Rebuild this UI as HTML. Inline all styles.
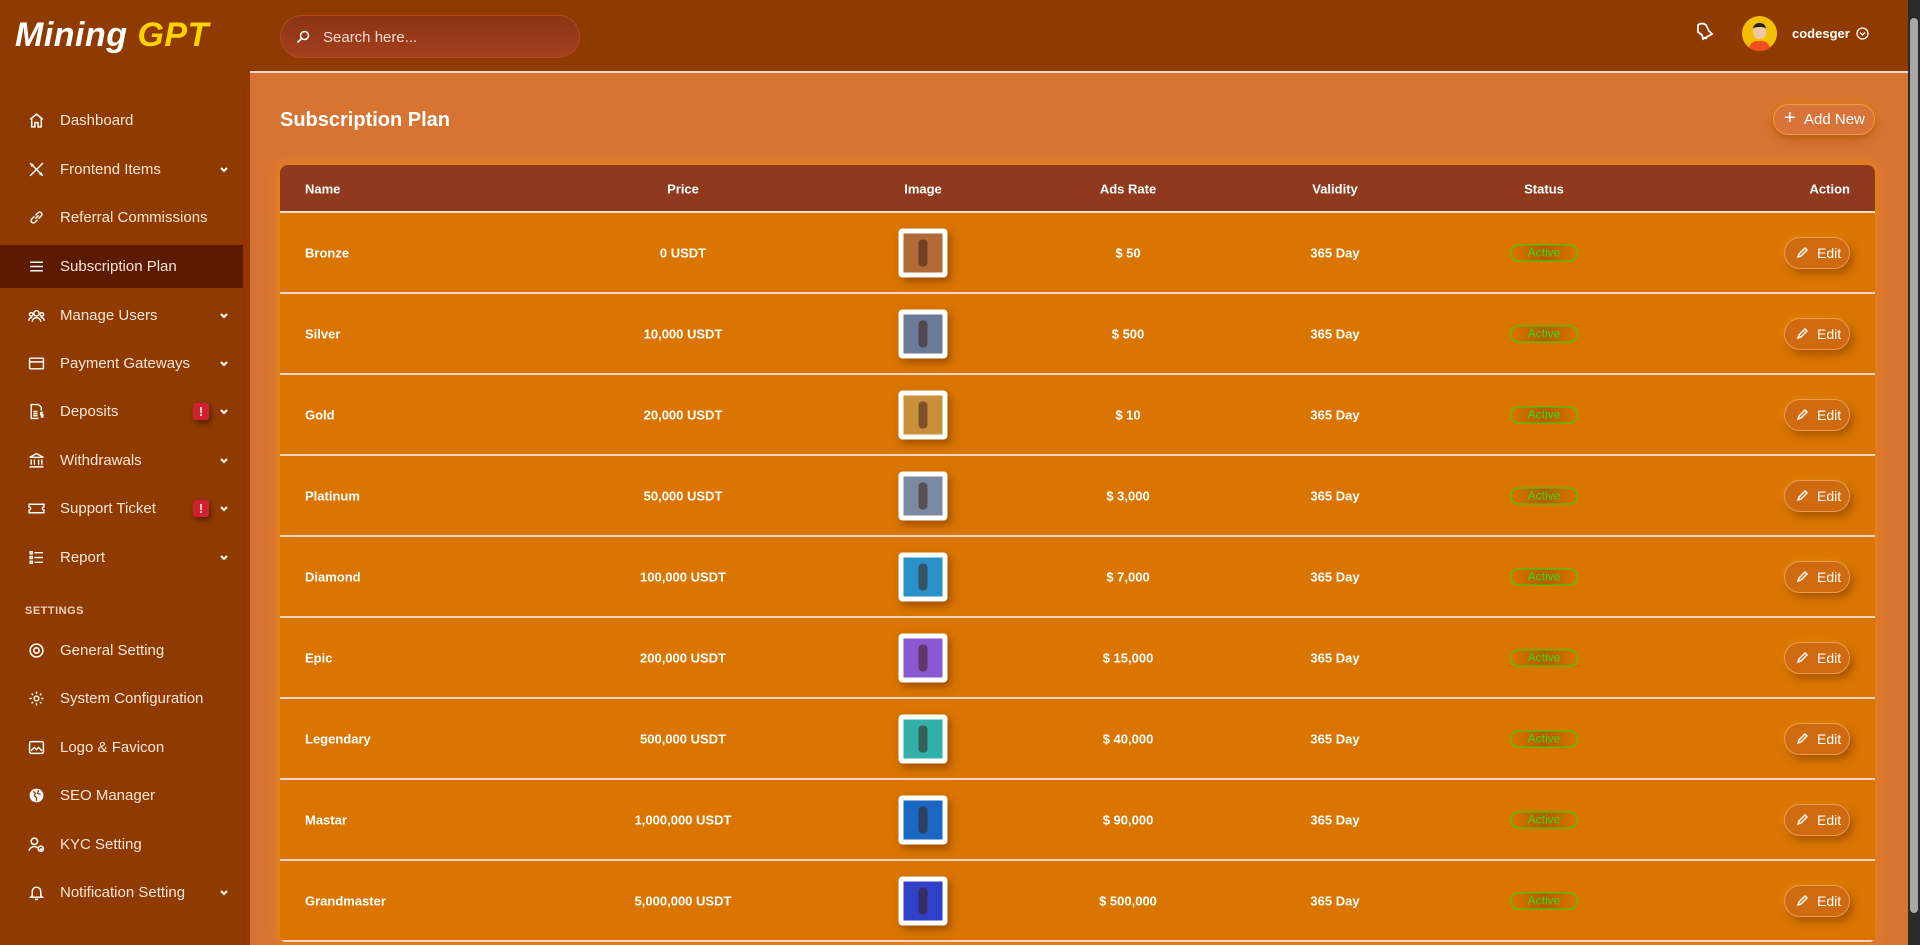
<!DOCTYPE html>
<html><head><meta charset="utf-8"><style>
*{box-sizing:border-box;margin:0;padding:0}
body{width:1920px;height:945px;overflow:hidden;background:#d87433;font-family:"Liberation Sans",sans-serif;color:#fff;position:relative}
.sb{position:absolute;left:0;top:0;width:250px;height:945px;background:#8e3a00}
.sb .edge{position:absolute;left:243px;top:90px;width:3px;height:855px;background:#a02e05}
.logo{position:absolute;left:15px;top:16px;font-size:34px;font-weight:bold;font-style:italic;letter-spacing:0.5px}
.logo span{color:#ffd400}
.item{position:absolute;left:0;width:243px;height:43px;display:flex;align-items:center;font-size:15px;color:#fbe6da}
.item.act{background:#5c1a00}
.item svg{position:absolute;left:28px;width:17px;height:17px}
.item .t{position:absolute;left:60px}
.item .ch{position:absolute;left:219px;width:10px;height:10px}
.bdg{position:absolute;left:193px;width:16px;height:17px;background:#d02030;border-radius:3px;font-weight:bold;font-size:13px;text-align:center;line-height:17px;box-shadow:2px 3px 6px rgba(0,0,0,.4)}
.set{position:absolute;left:25px;top:605px;font-size:11px;font-weight:bold;color:#f0d0c0;letter-spacing:.5px}
.hd{position:absolute;left:250px;top:0;width:1658px;height:73px;background:#8e3a00;border-bottom:2px solid #f3d9c8}
.search{position:absolute;left:30px;top:15px;width:300px;height:43px;border-radius:22px;background:linear-gradient(#8a3414,#a4401e);border:1px solid #b24a20;font-size:15px;color:#f4dcd0;padding:13px 0 0 42px}
.search svg{position:absolute;left:15px;top:14px}
.scroll{position:absolute;right:0;top:0;width:12px;height:945px;background:#2a2a2a}
.scroll div{position:absolute;left:2px;top:18px;width:8px;height:895px;background:#a8a8a8;border-radius:4px}
h1{position:absolute;left:280px;top:109px;font-size:20px;font-weight:bold}
.add{position:absolute;left:1773px;top:104px;width:102px;height:31px;border-radius:16px;border:1px solid #f09a50;background:#d8743a;box-shadow:0 3px 8px rgba(120,50,0,.5),0 0 10px #f08a10;font-size:15px;padding:6px 0 0 30px}
.add b{position:absolute;left:10px;top:2px;font-size:20px;font-weight:normal}
.tbl{position:absolute;left:280px;top:165px;width:1595px;height:778px;border-radius:8px;overflow:hidden;background:#d97500;box-shadow:0 0 14px #f08a10}
.th{height:48px;background:#8f3a1e;border-bottom:2px solid #f5e0d0;position:relative;font-size:13px;font-weight:bold}
.row{height:81px;border-bottom:2px solid #f0d8c0;position:relative;font-size:13px;font-weight:bold}
.c{position:absolute;top:50%;transform:translate(-50%,-50%);white-space:nowrap}
.l{position:absolute;top:50%;transform:translateY(-50%)}
.th .c,.th .l{top:24px}
.th .l{transform:translateY(-50%)}
.img{width:49px;height:49px;background:#fff;border-radius:4px;padding:5px;box-shadow:3px 4px 8px rgba(100,40,0,.5)}
.img div{width:100%;height:100%;position:relative}
.img div:after{content:"";position:absolute;left:15px;top:6px;width:9px;height:27px;background:rgba(60,30,20,.55);border-radius:4px}
.act2{width:68px;height:17px;border:1.5px solid #22e010;border-radius:9px;color:#30e010;font-size:12px;font-weight:normal;text-align:center;line-height:14px;background:linear-gradient(90deg,#d97500,#b85a00,#d97500)}
.edit{position:absolute;right:25px;top:50%;transform:translateY(-50%);width:66px;height:32px;border-radius:16px;border:1px solid #f09a50;background:#d06a10;box-shadow:3px 4px 8px rgba(100,40,0,.5),0 0 8px #f09010;font-size:14px;font-weight:normal;padding:7px 0 0 32px}
.edit svg{position:absolute;left:11px;top:9px}
</style></head><body>
<div class="sb"><div class="edge"></div>
<div class="logo">Mining <span>GPT</span></div>
<div class="item" style="top:99px"><svg viewBox="0 0 16 16" fill="none" stroke="#fff" stroke-width="1.4"><path d="M2 7L8 2l6 5M3.5 6v8h3v-4h3v4h3V6"/></svg><span class="t">Dashboard</span></div>
<div class="item" style="top:148px"><svg viewBox="0 0 16 16" fill="none" stroke="#fff" stroke-width="1.4"><path d="M2 2l12 12M14 2L2 14M3 5l2-2M11 13l2-2"/></svg><span class="t">Frontend Items</span><svg class="ch" viewBox="0 0 10 10"><path d="M2 3l3 3 3-3" stroke="#fff" stroke-width="2" fill="none"/></svg></div>
<div class="item" style="top:196px"><svg viewBox="0 0 16 16" fill="none" stroke="#fff" stroke-width="1.4"><path d="M7 9l3-3M6 7L3.5 9.5a2 2 0 003 3L9 10M10 9l2.5-2.5a2 2 0 00-3-3L7 6"/></svg><span class="t">Referral Commissions</span></div>
<div class="item act" style="top:245px"><svg viewBox="0 0 16 16" stroke="#fff" stroke-width="1.5"><path d="M2 4h12M2 8h12M2 12h12"/></svg><span class="t">Subscription Plan</span></div>
<div class="item" style="top:294px"><svg viewBox="0 0 16 16" fill="none" stroke="#fff" stroke-width="1.3"><circle cx="8" cy="6" r="2.5"/><circle cx="3" cy="7" r="1.7"/><circle cx="13" cy="7" r="1.7"/><path d="M4 14a4 4 0 018 0M1 13a2.5 2.5 0 013-3M15 13a2.5 2.5 0 00-3-3"/></svg><span class="t">Manage Users</span><svg class="ch" viewBox="0 0 10 10"><path d="M2 3l3 3 3-3" stroke="#fff" stroke-width="2" fill="none"/></svg></div>
<div class="item" style="top:342px"><svg viewBox="0 0 16 16" fill="none" stroke="#fff" stroke-width="1.4"><rect x="1.5" y="3" width="13" height="10" rx="1"/><path d="M1.5 6.5h13"/></svg><span class="t">Payment Gateways</span><svg class="ch" viewBox="0 0 10 10"><path d="M2 3l3 3 3-3" stroke="#fff" stroke-width="2" fill="none"/></svg></div>
<div class="item" style="top:390px"><svg viewBox="0 0 16 16" fill="none" stroke="#fff" stroke-width="1.3"><path d="M10 1.5H3v13h7M10 1.5l2.5 2.5v3M5 8h4M5 10h4M5 12h4"/><path d="M14 9h-2v2h2v2h-2M13 8v6"/></svg><span class="t">Deposits</span><div class="bdg" style="top:13px">!</div><svg class="ch" viewBox="0 0 10 10"><path d="M2 3l3 3 3-3" stroke="#fff" stroke-width="2" fill="none"/></svg></div>
<div class="item" style="top:439px"><svg viewBox="0 0 16 16" fill="none" stroke="#fff" stroke-width="1.3"><path d="M1.5 5L8 1.5 14.5 5zM3 7v5M6 7v5M10 7v5M13 7v5M1.5 14h13"/></svg><span class="t">Withdrawals</span><svg class="ch" viewBox="0 0 10 10"><path d="M2 3l3 3 3-3" stroke="#fff" stroke-width="2" fill="none"/></svg></div>
<div class="item" style="top:487px"><svg viewBox="0 0 16 16" fill="none" stroke="#fff" stroke-width="1.3"><path d="M1 4h14v2.5a1.5 1.5 0 000 3V12H1V9.5a1.5 1.5 0 000-3z"/></svg><span class="t">Support Ticket</span><div class="bdg" style="top:13px">!</div><svg class="ch" viewBox="0 0 10 10"><path d="M2 3l3 3 3-3" stroke="#fff" stroke-width="2" fill="none"/></svg></div>
<div class="item" style="top:536px"><svg viewBox="0 0 16 16" fill="none" stroke="#fff" stroke-width="1.3"><path d="M2 2.5h2v2H2zM2 7h2v2H2zM2 11.5h2v2H2zM6 3.5h8M6 8h8M6 12.5h8"/></svg><span class="t">Report</span><svg class="ch" viewBox="0 0 10 10"><path d="M2 3l3 3 3-3" stroke="#fff" stroke-width="2" fill="none"/></svg></div>
<div class="set">SETTINGS</div>
<div class="item" style="top:629px"><svg viewBox="0 0 16 16" fill="none" stroke="#fff" stroke-width="1.5"><circle cx="8" cy="8" r="6"/><circle cx="8" cy="8" r="2.5"/></svg><span class="t">General Setting</span></div>
<div class="item" style="top:677px"><svg viewBox="0 0 16 16" fill="none" stroke="#fff" stroke-width="1.4"><circle cx="8" cy="8" r="2.2"/><path d="M8 1.5v2M8 12.5v2M1.5 8h2M12.5 8h2M3.4 3.4l1.4 1.4M11.2 11.2l1.4 1.4M3.4 12.6l1.4-1.4M11.2 4.8l1.4-1.4"/></svg><span class="t">System Configuration</span></div>
<div class="item" style="top:726px"><svg viewBox="0 0 16 16" fill="none" stroke="#fff" stroke-width="1.4"><rect x="1.5" y="2.5" width="13" height="11" rx="1.5"/><path d="M3 11l3-3 2 2 2-2 3 3"/></svg><span class="t">Logo &amp; Favicon</span></div>
<div class="item" style="top:774px"><svg viewBox="0 0 16 16"><circle cx="8" cy="8" r="6.5" fill="#fff"/><path d="M5 4l2 2-1 2 2 2v3M10 3l-1 3 3 1" stroke="#8e3a00" stroke-width="1.2" fill="none"/></svg><span class="t">SEO Manager</span></div>
<div class="item" style="top:823px"><svg viewBox="0 0 16 16" fill="none" stroke="#fff" stroke-width="1.4"><circle cx="6" cy="5" r="3"/><path d="M1 14a5 5 0 018-3"/><circle cx="12" cy="12" r="2.5"/><path d="M11 12l1 1 1.5-1.5"/></svg><span class="t">KYC Setting</span></div>
<div class="item" style="top:871px"><svg viewBox="0 0 16 16" fill="none" stroke="#fff" stroke-width="1.4"><path d="M4 11V7a4 4 0 018 0v4l1.5 1.5h-11zM6.5 14.5h3"/></svg><span class="t">Notification Setting</span><svg class="ch" viewBox="0 0 10 10"><path d="M2 3l3 3 3-3" stroke="#fff" stroke-width="2" fill="none"/></svg></div>
</div>

<div class="hd">
<div class="search"><svg width="14" height="14" viewBox="0 0 14 14" fill="none" stroke="#fff" stroke-width="1.6"><circle cx="8.5" cy="5.5" r="4"/><path d="M5.5 8.5L1.5 12.5"/></svg>Search here...</div>
<svg style="position:absolute;left:1443px;top:21px" width="22" height="22" viewBox="0 0 22 22" fill="none" stroke="#fff" stroke-width="1.8"><path d="M5 4a6 6 0 018 0l3 6 3 3-9 5-1-4-4-3z"/><path d="M11 16a2 2 0 003 1"/></svg>
<div style="position:absolute;left:1492px;top:16px;width:35px;height:35px;border-radius:50%;background:#f2c000;overflow:hidden"><div style="position:absolute;left:11px;top:7px;width:13px;height:16px;border-radius:6px;background:#f0c8a0;border-top:4px solid #222"></div><div style="position:absolute;left:7px;top:25px;width:21px;height:14px;border-radius:8px 8px 0 0;background:#f05020"></div></div>
<div style="position:absolute;left:1542px;top:26px;font-size:13px;font-weight:bold">codesger</div>
<svg style="position:absolute;left:1606px;top:27px" width="13" height="13" viewBox="0 0 13 13" fill="none" stroke="#fff" stroke-width="1.3"><circle cx="6.5" cy="6.5" r="5.5"/><path d="M4 5.5l2.5 2.5L9 5.5"/></svg>
</div>

<h1>Subscription Plan</h1>
<div class="add"><b>+</b>Add New</div>

<div class="tbl">
<div class="th"><span class="l" style="left:25px">Name</span><span class="c" style="left:403px">Price</span><span class="c" style="left:643px">Image</span><span class="c" style="left:848px">Ads Rate</span><span class="c" style="left:1055px">Validity</span><span class="c" style="left:1264px">Status</span><span class="l" style="right:25px">Action</span></div>
<div id="rows"></div>
</div>
<div class="scroll"><div></div></div>
<script>
var d=[["Bronze","0 USDT","$ 50","#b06a38"],["Silver","10,000 USDT","$ 500","#6a7a98"],["Gold","20,000 USDT","$ 10","#c8903a"],["Platinum","50,000 USDT","$ 3,000","#7a8aa2"],["Diamond","100,000 USDT","$ 7,000","#2a90c8"],["Epic","200,000 USDT","$ 15,000","#8a58d0"],["Legendary","500,000 USDT","$ 40,000","#30b0a8"],["Mastar","1,000,000 USDT","$ 90,000","#1a68c0"],["Grandmaster","5,000,000 USDT","$ 500,000","#3040c8"]];
var h="";d.forEach(function(r){h+='<div class="row"><span class="l" style="left:25px">'+r[0]+'</span><span class="c" style="left:403px">'+r[1]+'</span><div class="c img" style="left:643px"><div style="background:'+r[3]+'"></div></div><span class="c" style="left:848px">'+r[2]+'</span><span class="c" style="left:1055px">365 Day</span><div class="c act2" style="left:1264px">Active</div><div class="edit"><svg width="12" height="12" viewBox="0 0 12 12" fill="none" stroke="#fff" stroke-width="1.5"><path d="M2 10l1-3 6-6 2 2-6 6z"/></svg>Edit</div></div>'});
document.getElementById("rows").innerHTML=h;
</script>
</body></html>
